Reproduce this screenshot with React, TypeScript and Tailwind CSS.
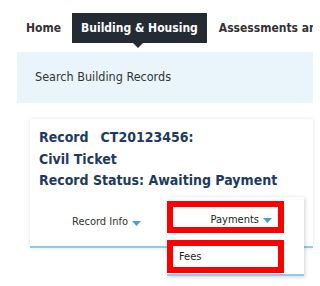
import React from "react";

const FONT = { fontFamily: '"DejaVu Sans Condensed", "DejaVu Sans", sans-serif' };

function Caret() {
  return (
    <svg width="9" height="5" viewBox="0 0 9 5" className="inline-block">
      <path d="M0 0h9L4.5 5z" fill="#4a9fd8" />
    </svg>
  );
}

export default function App() {
  return (
    <div className="w-[320px] h-[286px] overflow-hidden bg-white" style={FONT}>
      {/* top nav */}
      <nav className="w-[313px] overflow-hidden flex items-center h-[30px] mt-[13px] pl-[26px] text-[12px] font-bold text-[#333333] whitespace-nowrap">
        <span>Home</span>
        <span className="relative ml-[11px] h-full flex items-center px-[9px] bg-[#252b33] text-white">
          Building &amp; Housing
        </span>
        <span className="ml-[12px]">Assessments and Taxes</span>
      </nav>
      {/* active tab pointer */}
      <div className="ml-[133px] w-0 h-0 border-l-[5px] border-r-[5px] border-t-[5px] border-l-transparent border-r-transparent border-t-[#252b33]" />

      <div className="w-[296px] ml-[17px]">
        {/* search bar */}
        <div className="mt-[4px] h-[51px] bg-[#eaf4fb] flex items-center pl-[18px] text-[12.5px] text-[#333333]">
          Search Building Records
        </div>

        {/* record card */}
        <div className="relative ml-[13px] mt-[16px] bg-white shadow-[0_0_4px_rgba(0,0,0,0.12)] border-b-2 border-[#8ecbee]">
          <div className="pt-[8px] pl-[9px] text-[14px] leading-[21.5px] font-bold text-[#1d3a63] whitespace-nowrap">
            <div>
              Record<span className="ml-[12px]">CT20123456:</span>
            </div>
            <div>Civil Ticket</div>
            <div>Record Status: Awaiting Payment</div>
          </div>
          <div className="h-[54px] flex items-center pl-[42px] pt-[8px] text-[11px] text-[#333333]">
            <span>Record Info</span>
            <span className="ml-[4px] mt-[1px] flex">
              <Caret />
            </span>
          </div>

          {/* payments dropdown */}
          <div className="absolute left-[137px] top-[78px] w-[137px] h-[79px] bg-white shadow-[1px_1px_4px_rgba(0,0,0,0.18)] border-b-2 border-[#8ecbee] flex flex-col pt-[4px] text-[11px] text-[#222222]">
            <div className="w-[117px] h-[32px] border-[6px] border-[#ff0000] flex items-center justify-end pr-[6px] pt-[6px]">
              <span>Payments</span>
              <span className="ml-[4px] mt-[1px] flex">
                <Caret />
              </span>
            </div>
            <div className="mt-[7px] w-[117px] h-[33px] border-[6px] border-[#ff0000] flex items-center pl-[6px] pt-[2px]">
              Fees
            </div>
          </div>
        </div>

        {/* next section heading */}
        <div className="ml-[13px] mt-[38px] text-[19px] font-bold text-[#222222] whitespace-nowrap">
          Work Location
        </div>
      </div>
    </div>
  );
}
